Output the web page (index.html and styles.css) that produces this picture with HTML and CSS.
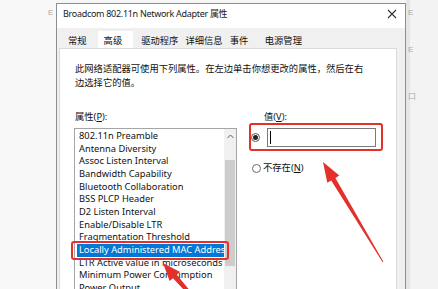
FILE: index.html
```html
<!DOCTYPE html>
<html lang="zh-CN">
<head>
<meta charset="utf-8">
<title>Broadcom 802.11n Network Adapter 属性</title>
<link rel="stylesheet" href="styles.css">
</head>
<body>
<div class="screen">
  <div class="side side-left"><span class="ghost">E</span></div>
  <div class="dialog">
    <div class="titlebar">
      <span class="title">Broadcom 802.11n Network Adapter 属性</span>
      <svg class="close" width="10" height="10" viewBox="0 0 10 10"><path d="M1 1L9 9M9 1L1 9" stroke="#333" stroke-width="1.1" fill="none"/></svg>
    </div>
    <div class="body">
      <div class="tabs">
        <span class="tab">常规</span>
        <span class="tab sel">高级</span>
        <span class="tab after-sel">驱动程序</span>
        <span class="tab near">详细信息</span>
        <span class="tab near">事件</span>
        <span class="tab far">电源管理</span>
      </div>
      <div class="page">
        <p class="desc">此网络适配器可使用下列属性。在左边单击你想更改的属性，然后在右<br>边选择它的值。</p>
        <div class="cols">
          <div class="leftcol">
            <div class="label">属性(<u>P</u>):</div>
            <div class="listbox">
              <ul class="items">
                <li>802.11n Preamble</li>
                <li>Antenna Diversity</li>
                <li>Assoc Listen Interval</li>
                <li>Bandwidth Capability</li>
                <li>Bluetooth Collaboration</li>
                <li>BSS PLCP Header</li>
                <li>D2 Listen Interval</li>
                <li>Enable/Disable LTR</li>
                <li>Fragmentation Threshold</li>
                <li class="sel">Locally Administered MAC Address</li>
                <li>LTR Active value in microseconds</li>
                <li>Minimum Power Consumption</li>
                <li>Power Output</li>
              </ul>
              <div class="scrollbar">
                <div class="sb-up"><svg width="7" height="5" viewBox="0 0 7 5"><path d="M0.5 4L3.5 1L6.5 4" stroke="#606060" stroke-width="1" fill="none"/></svg></div>
                <div class="sb-gap"></div>
                <div class="sb-thumb"></div>
              </div>
            </div>
          </div>
          <div class="rightcol">
            <div class="label">值(<u>V</u>):</div>
            <div class="valrow">
              <span class="radio on"></span>
              <div class="textbox"><span class="caret"></span></div>
            </div>
            <div class="radiorow">
              <span class="radio"></span>
              <span class="radiotext">不存在(<u>N</u>)</span>
            </div>
          </div>
        </div>
      </div>
    </div>
  </div>
  <div class="side side-right">
    <span class="ghost g1">E</span>
    <span class="ghost g2">E</span>
    <span class="ghost g3">口</span>
  </div>
</div>
<svg class="annot" width="438" height="289" viewBox="0 0 438 289">
  <rect x="250" y="124" width="132" height="26" rx="2" fill="none" stroke="#e3302a" stroke-width="2"/>
  <rect x="72" y="242" width="156" height="17" rx="2" fill="none" stroke="#e3302a" stroke-width="2"/>
  <polygon points="323,162 327.3,182.8 331.2,180.5 382.6,262.3 383.4,261.7 335.4,177.9 339.3,175.6" fill="#e3302a"/>
  <polygon points="163,263 169.65,281.1 173,278.2 198.9,306 201.1,304 176.8,274.8 180.15,271.9" fill="#e3302a"/>
</svg>
</body>
</html>
```

FILE: styles.css
```css
* { box-sizing: border-box; }
html, body { margin: 0; padding: 0; height: 100%; overflow: hidden; }
body {
  font-family: "Noto Sans", "Noto Sans CJK SC", sans-serif;
  background: #f6f6f6;
  color: #000;
}
.screen {
  display: flex;
  width: 438px;
  height: 289px;
  overflow: hidden;
}
.side { flex: none; }
.side-left {
  width: 56px;
  background: #f8f8f8;
  padding: 8px 0 0 48px;
}
.ghost {
  display: block;
  font-family: "Liberation Sans", sans-serif;
  font-size: 8px;
  line-height: 10px;
  color: #a9a9a9;
}
.side-right {
  flex: 1;
  background: linear-gradient(to right, #e6e6e6 0 4px, #f3f3f3 4px);
  padding: 8px 0 0 2px;
}
.side-right .g2 { margin-top: 27px; }
.side-right .g3 { margin-top: 37px; }

.dialog {
  width: 350px;
  flex: none;
  margin-top: 3px;
  border: 1px solid #8e8e8e;
  border-bottom: none;
  display: flex;
  flex-direction: column;
  background: #f0f0f0;
  min-height: 0;
  overflow: hidden;
}
.titlebar {
  flex: none;
  height: 24px;
  background: #fff;
  display: flex;
  align-items: flex-start;
  justify-content: space-between;
  padding: 3px 8px 0 6px;
}
.title {
  font-size: 9px;
  letter-spacing: -0.3px;
  line-height: 14px;
  color: #1a1a1a;
  white-space: nowrap;
}
.close { margin-top: 2px; flex: none; }

.body {
  flex: 1;
  min-height: 0;
  display: flex;
  flex-direction: column;
}
.tabs {
  flex: none;
  height: 20px;
  padding: 3px 0 0 11px;
  display: flex;
  align-items: flex-end;
}
.tab {
  font-size: 9.3px;
  line-height: 14px;
  padding-top: 3px;
  height: 17px;
  color: #111;
  white-space: nowrap;
}
.tab.sel {
  background: #fff;
  margin-left: 11px;
  padding-left: 6px;
  padding-right: 11px;
}
.tab.after-sel { margin-left: 8px; }
.tab.near { margin-left: 7px; }
.tab.far { margin-left: 16.5px; }

.page {
  flex: 1;
  min-height: 0;
  overflow: hidden;
  background: #fff;
  border: 1px solid #dadada;
  border-bottom: none;
  margin: 0 8px 0 2px;
  padding: 13px 0 0 15px;
}
.desc {
  margin: 0;
  font-size: 9.3px;
  line-height: 14px;
  color: #111;
}
.cols {
  display: flex;
  margin-top: 20px;
}
.label {
  font-size: 9.3px;
  line-height: 14px;
  color: #111;
}
.leftcol {
  width: 163px;
  flex: none;
  margin-left: -1px;
}
.leftcol .label { padding-left: 1px; }
.listbox {
  margin-top: 4px;
  height: 200px;
  border: 1px solid #a5a5a5;
  display: flex;
}
.items {
  flex: 1;
  min-width: 0;
  list-style: none;
  margin: 0;
  padding: 1px 0 0 2px;
  font-size: 9.3px;
  line-height: 12.67px;
  white-space: nowrap;
  overflow: hidden;
  color: #111;
}
.items li { padding-left: 2px; overflow: hidden; }
.items li.sel { background: #0078d7; color: #fff; }
.scrollbar {
  width: 12px;
  flex: none;
  background: #f0f0f0;
  display: flex;
  flex-direction: column;
}
.sb-up {
  flex: none;
  height: 14px;
  display: flex;
  align-items: center;
  justify-content: center;
}
.sb-gap { flex: none; height: 17px; }
.sb-thumb {
  flex: none;
  height: 106px;
  background: #cdcdcd;
  margin: 0 1px;
}

.rightcol {
  flex: 1;
  margin-left: 13px;
}
.rightcol .label { padding-left: 14px; }
.valrow {
  margin-top: 4px;
  height: 19px;
  display: flex;
  align-items: center;
}
.radio {
  width: 9px;
  height: 9px;
  flex: none;
  border: 1px solid #5a5a5a;
  border-radius: 50%;
  background: #fff;
  display: flex;
  align-items: center;
  justify-content: center;
}
.valrow .radio { margin-left: 1px; }
.radio.on::after {
  content: "";
  width: 5px;
  height: 5px;
  border-radius: 50%;
  background: #222;
}
.textbox {
  margin-left: 7px;
  width: 109px;
  height: 19px;
  border: 1px solid #7a7a7a;
  display: flex;
  align-items: center;
}
.caret {
  margin-left: 2px;
  width: 1px;
  height: 13px;
  background: #000;
}
.radiorow {
  margin-top: 14px;
  height: 14px;
  display: flex;
  align-items: center;
}
.radiorow .radio { margin-left: 2px; border-color: #6a6a6a; }
.radiotext {
  margin-left: 2px;
  font-size: 9.3px;
  line-height: 14px;
  color: #111;
}

.annot {
  position: fixed;
  left: 0;
  top: 0;
  pointer-events: none;
}
```
